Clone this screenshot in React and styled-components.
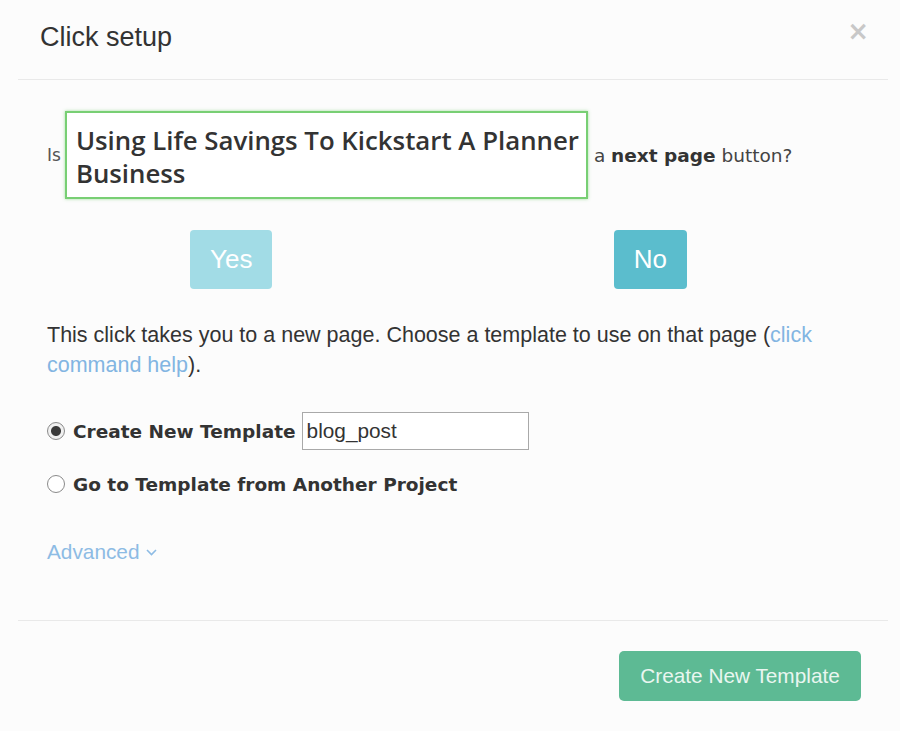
import React from "react";
import styled, { createGlobalStyle } from "styled-components";

const Global = createGlobalStyle`
  html, body { margin: 0; padding: 0; background: #fcfcfc; }
  body { font-family: "Liberation Sans", Arial, sans-serif; color: #333; }
`;

const Modal = styled.div`
  width: 900px;
  height: 731px;
  box-sizing: border-box;
  padding: 0 12px 0 18px;
  background: #fcfcfc;
`;

const Header = styled.div`
  height: 80px;
  border-bottom: 1px solid #e9e9e9;
  display: flex;
  align-items: flex-start;
  justify-content: space-between;
  padding: 0 19px 0 22px;
  box-sizing: border-box;
`;

const Title = styled.h4`
  margin: 22px 0 0;
  font-size: 27px;
  line-height: 30px;
  font-weight: normal;
  color: #333;
`;

const Close = styled.span`
  margin-top: 16px;
  font-family: "DejaVu Sans", sans-serif;
  font-size: 26px;
  font-weight: bold;
  line-height: 30px;
  color: #c8c8c8;
`;

const Body = styled.div`
  padding: 31px 27px 53px 29px;
  border-bottom: 1px solid #e9e9e9;
`;

const Question = styled.div`
  display: flex;
  align-items: center;
  font-family: "DejaVu Sans", Verdana, sans-serif;
  font-size: 18.5px;
  color: #444;
`;

const Is = styled.span`
  font-size: 17px;
  color: #555;
`;

const Highlight = styled.div`
  width: 523px;
  box-sizing: border-box;
  margin: 0 6px 0 4px;
  padding: 11px 2px 7px 9px;
  border: 2px solid #78cf74;
  box-shadow: 0 0 3px rgba(120, 207, 116, 0.7);
  background: #fff;
  font-family: "Open Sans", sans-serif;
  font-weight: 600;
  font-size: 25.8px;
  line-height: 33px;
  color: #333;
`;

const Bold = styled.b`
  font-family: "DejaVu Sans", Verdana, sans-serif;
  font-weight: bold;
  color: #333;
`;

const Choices = styled.div`
  display: flex;
  justify-content: space-between;
  margin-top: 31px;
  padding: 0 174px 0 143px;
`;

const ChoiceButton = styled.button`
  height: 59px;
  padding: 0 ${(p) => p.$padX}px;
  border: none;
  border-radius: 4px;
  background: ${(p) => (p.$muted ? "#a2dce6" : "#5bbdcd")};
  color: #fff;
  font-family: "Liberation Sans", Arial, sans-serif;
  font-size: 26px;
  cursor: pointer;
`;

const Paragraph = styled.p`
  margin: 31px 0 0;
  font-size: 21.5px;
  line-height: 30px;
  color: #333;
`;

const Link = styled.a`
  color: #82b5e2;
  text-decoration: none;
`;

const RadioRow = styled.label`
  display: flex;
  align-items: center;
  margin-top: ${(p) => p.$mt}px;
  height: ${(p) => p.$h}px;
  font-family: "DejaVu Sans", Verdana, sans-serif;
  font-weight: bold;
  font-size: 18.5px;
  color: #333;
`;

const Radio = styled.span`
  width: 18px;
  height: 18px;
  box-sizing: border-box;
  border-radius: 50%;
  border: 1.5px solid #8a8a8a;
  background: ${(p) =>
    p.$checked
      ? "radial-gradient(circle, #3a3a3a 0 4.5px, #f0f0f0 5.5px)"
      : "#fff"};
  margin-right: 8px;
  flex: none;
`;

const TextInput = styled.input`
  margin-left: 6px;
  width: 227px;
  height: 38px;
  box-sizing: border-box;
  border: 1px solid #a9a9a9;
  padding: 0 4px;
  font-family: "Liberation Sans", Arial, sans-serif;
  font-size: 20.8px;
  color: #333;
  background: #fff;
  outline: none;
`;

const Advanced = styled.a`
  display: inline-flex;
  align-items: center;
  gap: 6px;
  margin-top: 38px;
  line-height: 30px;
  font-size: 20.8px;
  color: #8dbbe4;
  text-decoration: none;
`;

const Footer = styled.div`
  display: flex;
  justify-content: flex-end;
  padding: 30px 27px 0 0;
`;

const PrimaryButton = styled.button`
  width: 242px;
  height: 50px;
  border: none;
  border-radius: 5px;
  background: #5dba94;
  color: #e9f6f0;
  font-family: "Liberation Sans", Arial, sans-serif;
  font-size: 20.8px;
`;

export default function App() {
  return (
    <>
      <Global />
      <Modal>
        <Header>
          <Title>Click setup</Title>
          <Close>×</Close>
        </Header>
        <Body>
          <Question>
            <Is>Is</Is>
            <Highlight>Using Life Savings To Kickstart A Planner Business</Highlight>
            <span>
              a <Bold>next page</Bold> button?
            </span>
          </Question>
          <Choices>
            <ChoiceButton $muted $padX={20}>Yes</ChoiceButton>
            <ChoiceButton $padX={20}>No</ChoiceButton>
          </Choices>
          <Paragraph>
            This click takes you to a new page. Choose a template to use on that page (
            <Link href="#">click command help</Link>).
          </Paragraph>
          <RadioRow $mt={32} $h={38}>
            <Radio $checked />
            Create New Template
            <TextInput defaultValue="blog_post" />
          </RadioRow>
          <RadioRow $mt={19} $h={30}>
            <Radio />
            Go to Template from Another Project
          </RadioRow>
          <Advanced href="#">
            Advanced
            <svg width="11" height="7" viewBox="0 0 11 7" fill="none">
              <path d="M1 1l4.5 4.5L10 1" stroke="#8dbbe4" strokeWidth="1.6" />
            </svg>
          </Advanced>
        </Body>
        <Footer>
          <PrimaryButton>Create New Template</PrimaryButton>
        </Footer>
      </Modal>
    </>
  );
}
